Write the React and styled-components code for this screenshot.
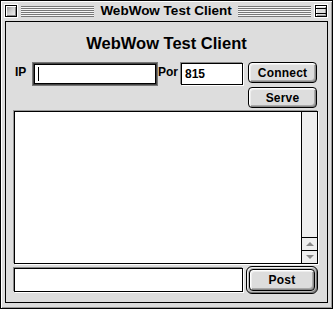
import React from "react";
import styled, { createGlobalStyle } from "styled-components";

const Global = createGlobalStyle`
  html, body { margin: 0; padding: 0; background: #ffffff; }
  body { font-family: "Liberation Sans", Arial, sans-serif; }
  * { box-sizing: border-box; }
`;

const Window = styled.div`
  width: 333px;
  height: 309px;
  border: 1px solid #000;
  background: #dddddd;
  box-shadow: inset 1px 1px 0 #ffffff, inset -1px -1px 0 #999999;
  display: flex;
  flex-direction: column;
  padding: 0 4px 5px 4px;
`;

const TitleBar = styled.div`
  height: 20px;
  flex: none;
  display: flex;
  align-items: center;
  gap: 4px;
  padding: 0 1px 0 0;
`;

const CloseBox = styled.div`
  width: 12px;
  height: 12px;
  flex: none;
  border: 1px solid #000;
  background: linear-gradient(135deg, #8c8c8c 0%, #cfcfcf 50%, #f4f4f4 100%);
  box-shadow: inset 1px 1px 0 #ffffff, inset -1px -1px 0 #888;
  outline: 1px solid #ffffff;
`;

const ShadeBox = styled.div`
  width: 12px;
  height: 12px;
  flex: none;
  border: 1px solid #000;
  background: #dddddd;
  box-shadow: inset 1px 1px 0 #ffffff, inset -1px -1px 0 #999;
  outline: 1px solid #ffffff;
  display: flex;
  flex-direction: column;
  justify-content: center;
  &::before {
    content: "";
    display: block;
    height: 4px;
    border-top: 1px solid #000;
    border-bottom: 1px solid #000;
  }
`;

const Stripes = styled.div`
  flex: 1;
  height: 11px;
  background: repeating-linear-gradient(
    to bottom,
    #777777 0px,
    #777777 1px,
    #f6f6f6 1px,
    #f6f6f6 2px
  );
`;

const Title = styled.div`
  flex: none;
  font-size: 13.5px;
  font-weight: bold;
  color: #000;
  padding: 0 2px;
  line-height: 16px;
`;

const Content = styled.div`
  flex: 1;
  border: 1px solid #000;
  background: #dddddd;
  display: flex;
  flex-direction: column;
`;

const Heading = styled.h1`
  margin: 12px 0 0 0;
  font-size: 16.5px;
  line-height: 18px;
  font-weight: bold;
  text-align: center;
  color: #000;
`;

const TopRow = styled.div`
  display: flex;
  align-items: flex-start;
  margin: 10px 0 0 9px;
`;

const Label = styled.span`
  width: ${(p) => p.$w}px;
  flex: none;
  margin-top: 3px;
  margin-left: ${(p) => p.$ml || 0}px;
  font-size: 12px;
  line-height: 14px;
  font-weight: bold;
  color: #000;
  white-space: nowrap;
  overflow: hidden;
`;

const Field = styled.div`
  width: ${(p) => p.$w}px;
  height: ${(p) => p.$h}px;
  flex: none;
  background: #fff;
  border: 1px solid #000;
  box-shadow: ${(p) =>
    p.$focus
      ? "0 0 0 1px #444444, 0 0 0 2px #777777"
      : "-1px -1px 0 #888888, 1px 1px 0 #ffffff"};
  margin-left: ${(p) => p.$ml || 0}px;
  margin-top: ${(p) => p.$mt || 0}px;
  padding: 0 3px;
  display: flex;
  align-items: center;
  font-size: 12px;
  font-weight: bold;
  color: #000;
`;

const Caret = styled.span`
  width: 1px;
  height: 14px;
  background: #000;
`;

const ButtonColumn = styled.div`
  display: flex;
  flex-direction: column;
  gap: 4px;
  margin-left: 5px;
`;

const Button = styled.div`
  width: ${(p) => p.$w}px;
  height: ${(p) => p.$h}px;
  border: 1px solid #000;
  border-radius: 4px;
  background: #dddddd;
  box-shadow: inset 1px 1px 0 #ffffff, inset 2px 2px 0 #eeeeee,
    inset -1px -1px 0 #888888, inset -2px -2px 0 #aaaaaa;
  display: flex;
  align-items: center;
  justify-content: center;
  font-size: 12px;
  font-weight: bold;
  color: #000;
  letter-spacing: 0.2px;
`;

const DefaultRing = styled.div`
  flex: none;
  margin-left: ${(p) => p.$ml || 0}px;
  padding: 2px;
  border: 1px solid #000;
  border-radius: 6px;
  background: #bbbbbb;
  box-shadow: inset 1px 1px 0 #eeeeee, inset -1px -1px 0 #777777;
`;

const LogArea = styled.div`
  margin: 3px 9px 0 8px;
  height: 153px;
  flex: none;
  border: 1px solid #000;
  background: #fff;
  display: flex;
  box-shadow: -1px -1px 0 #999999, 1px 1px 0 #ffffff;
`;

const LogText = styled.div`
  flex: 1;
`;

const ScrollBar = styled.div`
  width: 16px;
  border-left: 1px solid #000;
  background: #eeeeee;
  display: flex;
  flex-direction: column;
  justify-content: flex-end;
`;

const Arrow = styled.div`
  height: 13px;
  border-top: 1px solid #000;
  display: flex;
  align-items: center;
  justify-content: center;
  background: #eeeeee;
  &::before {
    content: "";
    width: 0;
    height: 0;
    border-left: 4px solid transparent;
    border-right: 4px solid transparent;
    ${(p) =>
      p.$dir === "up"
        ? "border-bottom: 4px solid #888888;"
        : "border-top: 4px solid #888888;"}
  }
`;

const BottomRow = styled.div`
  display: flex;
  align-items: center;
  margin: 2px 0 0 8px;
`;

export default function App() {
  return (
    <>
      <Global />
      <Window>
        <TitleBar>
          <CloseBox />
          <Stripes />
          <Title>WebWow Test Client</Title>
          <Stripes />
          <ShadeBox />
        </TitleBar>
        <Content>
          <Heading>WebWow Test Client</Heading>
          <TopRow>
            <Label $w={14}>IP</Label>
            <Field $w={122} $h={20} $ml={5} $mt={2} $focus>
              <Caret />
            </Field>
            <Label $w={22} $ml={2}>Por</Label>
            <Field $w={62} $h={22} $ml={1} $mt={1}>815</Field>
            <ButtonColumn>
              <Button $w={69} $h={21}>Connect</Button>
              <Button $w={69} $h={21}>Serve</Button>
            </ButtonColumn>
          </TopRow>
          <LogArea>
            <LogText />
            <ScrollBar>
              <Arrow $dir="up" />
              <Arrow $dir="down" />
            </ScrollBar>
          </LogArea>
          <BottomRow>
            <Field $w={229} $h={24} />
            <DefaultRing $ml={3}>
              <Button $w={66} $h={22}>Post</Button>
            </DefaultRing>
          </BottomRow>
        </Content>
      </Window>
    </>
  );
}
